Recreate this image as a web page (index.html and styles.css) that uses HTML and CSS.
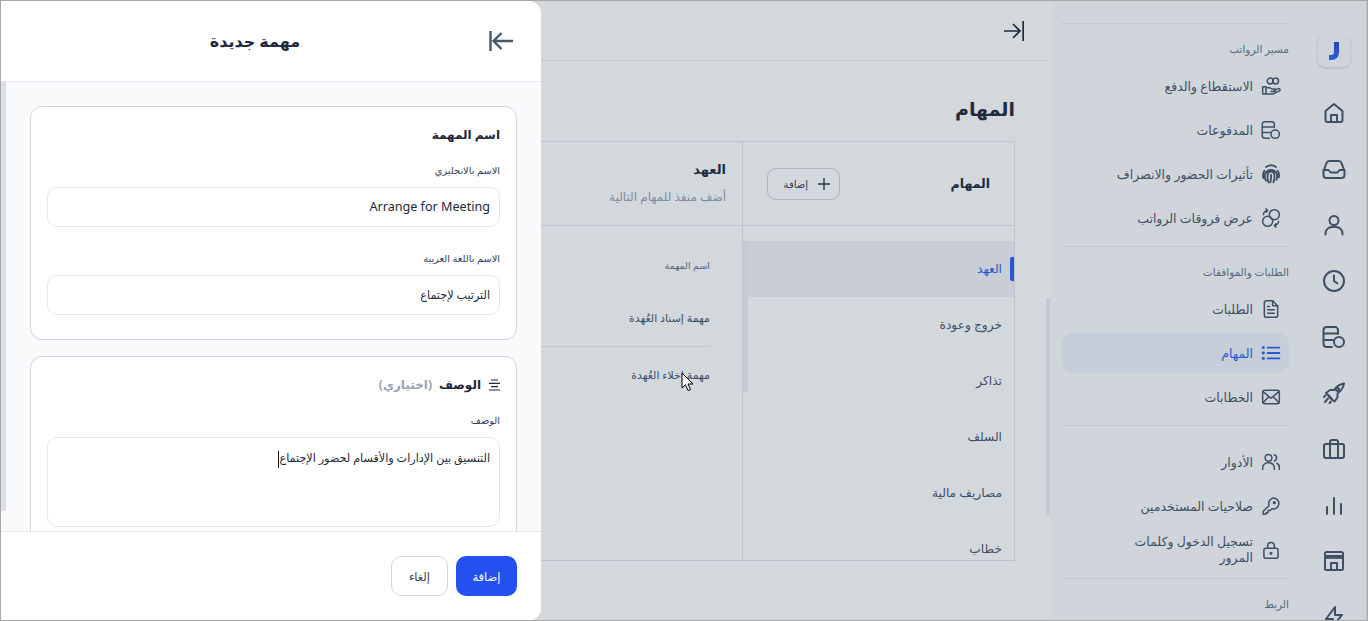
FILE: index.html
```html
<!DOCTYPE html>
<html lang="ar" dir="rtl">
<head>
	<meta charset="UTF-8">
	<title>المهام</title>
	<link rel="stylesheet" href="styles.css">
</head>
<body>
<div class="app">

	<!-- icon rail -->
	<nav class="rail">
		<div class="logo">
			<svg width="10" height="18" viewBox="0 0 10 18"><defs><linearGradient id="j" x1="0" y1="0" x2="0" y2="1"><stop offset="0" stop-color="#1f4cb0"/><stop offset=".6" stop-color="#2b62ee"/></linearGradient></defs><path fill="url(#j)" d="M5 0h5v10c0 5-3 8-8 8H0v-5h2c2 0 3-1 3-3z"/></svg>
		</div>
		<svg class="rail-icon" viewBox="0 0 24 24"><path d="M3.500 10 12 3l8.500 7v9a2 2 0 0 1-2 2h-13a2 2 0 0 1-2-2z"/><path d="M9 21v-7h6v7"/></svg>
		<svg class="rail-icon" viewBox="0 0 24 24"><path d="M1.500 14 4.500 6a3 3 0 0 1 2.800-2h9.400a3 3 0 0 1 2.800 2l3 8v4a3 3 0 0 1-3 3h-15a3 3 0 0 1-3-3z"/><path d="M1.500 13h5l2 2.500h7l2-2.500h5"/></svg>
		<svg class="rail-icon" viewBox="0 0 24 24"><circle cx="12" cy="7.500" r="4.500"/><path d="M3.500 21.500v-1a6.500 6.500 0 0 1 6.500-6.500h4a6.500 6.500 0 0 1 6.500 6.500v1"/></svg>
		<svg class="rail-icon" viewBox="0 0 24 24"><circle cx="12" cy="12" r="10"/><path d="M12 6.500V12l3.500 2.500"/></svg>
		<svg class="rail-icon" viewBox="0 0 24 24"><path d="M16 9V5c0-1.700-1.500-3-3-3H5C3 2 1.500 3.300 1.500 5v14c0 1.700 1.500 3 3.500 3h5M1.500 8.500H16M1.500 15H11"/><circle cx="17" cy="17" r="5"/></svg>
		<svg class="rail-icon" viewBox="0 0 24 24"><path d="M6.500 14.500 4 12l4-3h4c3-4 6-6 10-6.500C21.500 6.500 19.500 9.500 15.500 12.500v4l-3 4-3-2.500z"/><path d="M6.500 14.500 9.500 18M6 17.500 3 21M3.500 14.500 2 16M9 20.500 7.500 22"/><circle cx="15.500" cy="8.500" r="1.500"/></svg>
		<svg class="rail-icon" viewBox="0 0 24 24"><rect x="2" y="7" width="20" height="14" rx="2"/><path d="M8 21V5a2 2 0 0 1 2-2h4a2 2 0 0 1 2 2v16"/></svg>
		<svg class="rail-icon" viewBox="0 0 24 24"><path d="M5 21v-7M12 21V5M19 21V11"/></svg>
		<svg class="rail-icon" viewBox="0 0 24 24"><rect x="3" y="3" width="18" height="18" rx="1.500"/><path d="M3 7h18M3 7c0 2.500 4.500 2.500 4.500 0 0 2.500 4.500 2.500 4.500 0 0 2.500 4.500 2.500 4.500 0 0 2.500 4.500 2.500 4.500 0M9 21v-7h6v7"/></svg>
		<svg class="rail-icon" viewBox="0 0 24 24"><path d="M13 2 4 14h7l-1 8 10-12h-7z"/></svg>
	</nav>

	<!-- section menu -->
	<aside class="side">
		<div class="side-group side-group-cut">
			<a class="side-item"><svg class="side-icon" viewBox="0 0 24 24"><path d="M5 4l14 16M19 4 5 20"/></svg><span>الإعدادات</span></a>
		</div>
		<div class="side-group">
			<div class="side-label">مسير الرواتب</div>
			<a class="side-item"><svg class="side-icon" viewBox="0 0 24 24"><circle cx="11" cy="6" r="3.500"/><circle cx="17.500" cy="6" r="3.500"/><path d="M2 13h4v8.500H2zM6 14h4l3 1.500h3a1.500 1.500 0 0 1 0 3h-4M16 17l4.500-1.800a1.500 1.500 0 0 1 1.500 2.600l-7 3.700H6"/></svg><span>الاستقطاع والدفع</span></a>
			<a class="side-item"><svg class="side-icon" viewBox="0 0 24 24"><path d="M16 9V5c0-1.700-1.500-3-3-3H5C3 2 1.500 3.300 1.500 5v14c0 1.700 1.500 3 3.500 3h5M1.500 8.500H16M1.500 15H11"/><circle cx="17" cy="17" r="5"/></svg><span>المدفوعات</span></a>
			<a class="side-item"><svg class="side-icon side-icon-thick" viewBox="0 0 24 24"><path d="M3 17a11 11 0 0 1 1-9M6 3.500a11 11 0 0 1 12 0M20 8a11 11 0 0 1 1.500 8M6 20a9 9 0 0 1-1-8 7.500 7.500 0 0 1 14 0c.5 2.500.5 5-.5 7M9 22c-1-2.500-1.500-5.500-1-9a4 4 0 0 1 8 0c.5 3.500 0 6-1 9M12 13c.3 3 0 6-.8 9"/></svg><span>تأثيرات الحضور والانصراف</span></a>
			<a class="side-item"><svg class="side-icon" viewBox="0 0 24 24"><circle cx="8" cy="16" r="6"/><circle cx="16" cy="8" r="6"/><path d="M3 8a5 5 0 0 1 5-5L6 1M6 5l2-2M21 16a5 5 0 0 1-5 5l2 2M18 19l-2 2"/></svg><span>عرض فروقات الرواتب</span></a>
		</div>
		<div class="side-group">
			<div class="side-label">الطلبات والموافقات</div>
			<a class="side-item"><svg class="side-icon" viewBox="0 0 24 24"><path d="M14 2H6.500A2.500 2.500 0 0 0 4 4.500v15A2.500 2.500 0 0 0 6.500 22h11a2.500 2.500 0 0 0 2.500-2.500V8z"/><path d="M14 2v6h6M8 13h8M8 17h8M8 9h2"/></svg><span>الطلبات</span></a>
			<a class="side-item side-item-on"><svg class="side-icon" viewBox="0 0 24 24"><path d="M8 5.500h14M8 12h14M8 18.500h14" stroke-width="2.200"/><path d="M2.500 5.500h.5M2.500 12h.5M2.500 18.500h.5" stroke-width="3.400"/></svg><span>المهام</span></a>
			<a class="side-item"><svg class="side-icon" viewBox="0 0 24 24"><rect x="2" y="4" width="20" height="16" rx="2.500"/><path d="m2.500 5.500 9.500 8 9.500-8M2.500 19l7-7.500M21.500 19l-7-7.500"/></svg><span>الخطابات</span></a>
		</div>
		<div class="side-group side-group-nolabel">
			<a class="side-item"><svg class="side-icon" viewBox="0 0 24 24"><circle cx="9" cy="7" r="4"/><path d="M2 21v-2a6 6 0 0 1 6-6h2a6 6 0 0 1 6 6v2M16 3.200a4 4 0 0 1 0 7.600M19 13.500a6 6 0 0 1 3 5.500v2"/></svg><span>الأدوار</span></a>
			<a class="side-item"><svg class="side-icon" viewBox="0 0 24 24"><path d="M15 2.500a6.500 6.500 0 1 1-1.800 12.750L11 17.500H8.500V20H6v2H2.500v-3.500l7.200-7.200A6.500 6.500 0 0 1 15 2.500z"/><circle cx="16" cy="8" r="1"/></svg><span>صلاحيات المستخدمين</span></a>
			<a class="side-item"><svg class="side-icon" viewBox="0 0 24 24"><rect x="3.500" y="10" width="17" height="12" rx="2.500"/><path d="M8 10V7a4 4 0 0 1 8 0v3"/><circle cx="12" cy="16" r="1"/></svg><span class="side-wrap">تسجيل الدخول وكلمات<br>المرور</span></a>
		</div>
		<div class="side-group side-group-last">
			<div class="side-label">الربط</div>
		</div>
	</aside>

	<!-- page behind the drawer -->
	<main class="page">
		<header class="topbar">
			<svg class="topbar-icon" viewBox="0 0 20 20"><path d="M0 10h16M9 3l7 7-7 7M19.200 0v20"/></svg>
		</header>
		<div class="content">
			<h1 class="page-title">المهام</h1>
			<section class="board">
				<div class="board-side">
					<div class="board-head">
						<h2>المهام</h2>
						<button class="btn-add"><svg width="12" height="12" viewBox="0 0 12 12"><path d="M6 0v12M0 6h12"/></svg>إضافة</button>
					</div>
					<ul class="type-list">
						<li class="type-on">العهد</li>
						<li>خروج وعودة</li>
						<li>تذاكر</li>
						<li>السلف</li>
						<li>مصاريف مالية</li>
						<li>خطاب</li>
					</ul>
					<div class="list-thumb"></div>
				</div>
				<div class="board-main">
					<div class="main-head">
						<h2>العهد</h2>
						<p>أضف منفذ للمهام التالية</p>
					</div>
					<div class="task-table">
						<div class="task-heading">اسم المهمة</div>
						<div class="task-row task-row-line">مهمة إسناد العُهدة</div>
						<div class="task-row">مهمة إخلاء العُهدة</div>
					</div>
				</div>
			</section>
		</div>
		<div class="page-thumb"></div>
	</main>

	<div class="dim"></div>

	<!-- new task drawer -->
	<section class="drawer">
		<header class="drawer-head">
			<h2>مهمة جديدة</h2>
			<svg class="drawer-close" viewBox="0 0 24 20"><path d="M1.500 0v20M24 10H4.500M12.500 2 4.500 10l8 8"/></svg>
		</header>
		<div class="drawer-body">
			<div class="drawer-thumb"></div>
			<div class="form-card">
				<h3>اسم المهمة</h3>
				<div class="field-label">الاسم بالانجليزي</div>
				<div class="field">Arrange for Meeting</div>
				<div class="field-label field-label-next">الاسم باللغة العربية</div>
				<div class="field field-ar">الترتيب لإجتماع</div>
			</div>
			<div class="form-card">
				<h3 class="desc-title">
					<svg width="11" height="12" viewBox="0 0 11 12"><path d="M2 1h7M0 4.300h11M2 7.700h7M0 11h11"/></svg>
					الوصف <span>(اختياري)</span>
				</h3>
				<div class="field-label">الوصف</div>
				<div class="field field-ar field-area">التنسيق بين الإدارات والأقسام لحضور الإجتماع<i class="caret"></i></div>
			</div>
		</div>
		<footer class="drawer-foot">
			<button class="btn-primary">إضافة</button>
			<button class="btn-cancel">إلغاء</button>
		</footer>
	</section>

	<svg class="cursor" width="13" height="20" viewBox="0 0 13 20"><path d="M1 1v15l3.500-3.200L7 18.500l2.500-1-2.500-5.500h5z"/></svg>
</div>
</body>
</html>
```

FILE: styles.css
```css
* {
	box-sizing: border-box;
}
html, body {
	margin: 0;
	height: 100%;
}
body {
	font-family: "Noto Sans", "DejaVu Sans", sans-serif;
	color: #1e293b;
	overflow: hidden;
}
h1, h2, h3, p, ul {
	margin: 0;
	padding: 0;
}
button {
	font-family: inherit;
	cursor: pointer;
}

/**
 * Page frame
 */
.app {
	position: relative;
	display: flex;
	height: 621px;
	border: 1px solid #a8a8a8;
	background: #fff;
	overflow: hidden;
}

/**
 * Icon rail
 */
.rail {
	flex: none;
	width: 66px;
	padding-top: 34px;
	display: flex;
	flex-direction: column;
	align-items: center;
	border-right: 1px solid #e6e9ee;
	background: #fcfcfd;
}
.logo {
	flex: none;
	width: 32px;
	height: 32px;
	margin-bottom: 34px;
	display: flex;
	align-items: center;
	justify-content: center;
	border-radius: 7px;
	background: #fafbfd;
	box-shadow: 0 1px 3px rgba(16,24,40,.2);
}
.rail-icon {
	flex: none;
	width: 24px;
	height: 24px;
	margin-bottom: 32px;
	fill: none;
	stroke: #475569;
	stroke-width: 2;
	stroke-linejoin: round;
	stroke-linecap: round;
}

/**
 * Section menu
 */
.side {
	flex: none;
	width: 251px;
	padding: 0 12px;
	background: #fcfcfd;
	overflow: hidden;
}
.side-group {
	display: flex;
	flex-direction: column;
	padding-bottom: 6px;
	border-bottom: 1px solid #e6e9ee;
}
.side-group-cut {
	margin-top: -31px;
	padding-bottom: 9px;
}
.side-group-nolabel {
	padding-top: 14px;
}
.side-group-last {
	border-bottom: 0;
}
.side-label {
	height: 18px;
	margin: 16px 0 6px;
	font-size: 10.500px;
	line-height: 18px;
	color: #64748b;
}
.side-item {
	display: flex;
	align-items: center;
	gap: 8px;
	height: 40px;
	margin: 2px 0;
	padding: 0 8px;
	border-radius: 10px;
	font-size: 12.500px;
	color: #475569;
}
.side-icon {
	flex: none;
	width: 20px;
	height: 20px;
	fill: none;
	stroke: currentColor;
	stroke-width: 1.800;
	stroke-linejoin: round;
	stroke-linecap: round;
}
.side-icon-thick {
	stroke-width: 2.200;
}
.side-wrap {
	line-height: 16px;
}
.side-item-on {
	background: #eff3fb;
	color: #2b62ee;
}

/**
 * Page behind the drawer
 */
.page {
	position: relative;
	flex: 1;
	min-width: 0;
	background: #fff;
}
.topbar {
	height: 60px;
	margin-right: 3px;
	padding: 20px 23px 0 0;
	border-bottom: 1px solid #e8eaee;
}
.topbar-icon {
	display: block;
	width: 20px;
	height: 20px;
	fill: none;
	stroke: #1f2937;
	stroke-width: 1.700;
}
.content {
	padding: 33px 35px 0 30px;
}
.page-title {
	height: 30px;
	margin-bottom: 17px;
	font-size: 19px;
	line-height: 30px;
	font-weight: 700;
}
.board {
	display: flex;
	height: 420px;
	border: 1px solid #e4e7ec;
}
.board-side {
	position: relative;
	flex: none;
	width: 272px;
	border-left: 1px solid #e4e7ec;
	overflow: hidden;
}
.board-head {
	height: 84px;
	padding: 0 24px;
	display: flex;
	align-items: center;
	justify-content: space-between;
	border-bottom: 1px solid #e4e7ec;
}
.board-head h2 {
	font-size: 12.500px;
	font-weight: 700;
}
.btn-add {
	width: 73px;
	height: 32px;
	padding: 0 9px 0 0;
	display: flex;
	align-items: center;
	gap: 10px;
	border: 1px solid #d0d5dd;
	border-radius: 9px;
	background: transparent;
	font-size: 10px;
	color: #344054;
}
.btn-add svg {
	fill: none;
	stroke: #1e293b;
	stroke-width: 1.300;
}
.type-list {
	padding-top: 15px;
	list-style: none;
}
.type-list li {
	position: relative;
	height: 56px;
	padding-right: 12px;
	font-size: 12.200px;
	line-height: 56px;
	color: #475569;
}
.type-on {
	background: #f2f2f9;
	color: #2f5fe8 !important;
}
.type-on:after {
	content: '';
	position: absolute;
	top: 16px;
	right: 0;
	width: 4px;
	height: 24px;
	border-radius: 2px 0 0 2px;
	background: #2b5cf0;
}
.list-thumb {
	position: absolute;
	top: 99px;
	left: 0;
	width: 5px;
	height: 151px;
	border-radius: 3px;
	background: #edeef4;
}
.board-main {
	flex: 1;
	min-width: 0;
}
.main-head {
	height: 84px;
	padding: 17px 16px 0 0;
	border-bottom: 1px solid #e4e7ec;
}
.main-head h2 {
	height: 20px;
	font-size: 13px;
	line-height: 20px;
	font-weight: 700;
}
.main-head p {
	margin-top: 8px;
	font-size: 12px;
	line-height: 20px;
	color: #94a3b8;
}
.task-table {
	width: 500px;
	padding: 26px 32px 0 0;
	font-size: 11px;
	color: #475569;
}
.task-heading {
	height: 28px;
	margin-bottom: 10px;
	font-size: 9.500px;
	line-height: 28px;
	color: #667085;
}
.task-row {
	height: 57px;
	line-height: 56px;
}
.task-row-line {
	border-bottom: 1px solid #e8eaee;
}
.page-thumb {
	position: absolute;
	top: 297px;
	right: 0;
	width: 4px;
	height: 217px;
	border-radius: 2px;
	background: #ebedf2;
}

/**
 * Dim layer and drawer
 */
.dim {
	position: absolute;
	top: 0; right: 0; bottom: 0; left: 0;
	background: rgba(35,60,85,.2);
}
.drawer {
	position: absolute;
	top: 0; bottom: 0; left: 0;
	width: 540px;
	display: flex;
	flex-direction: column;
	border-radius: 0 12px 12px 0;
	background: #fff;
	overflow: hidden;
}
.drawer-head {
	flex: none;
	height: 81px;
	padding-right: 28px;
	display: flex;
	align-items: center;
	border-bottom: 1px solid #e6e9ee;
}
.drawer-head h2 {
	flex: 1;
	padding-left: 20px;
	text-align: center;
	font-size: 16px;
	font-weight: 700;
}
.drawer-close {
	order: -1;
	flex: none;
	width: 24px;
	height: 20px;
	fill: none;
	stroke: #475569;
	stroke-width: 2.400;
}
.drawer-body {
	position: relative;
	flex: 1;
	min-height: 0;
	padding: 24px 24px 0 29px;
	background: #f9fafc;
	overflow: hidden;
}
.drawer-thumb {
	position: absolute;
	top: 0;
	left: 0;
	width: 5px;
	height: 429px;
	background: #dcdfe4;
}
.form-card {
	margin-bottom: 16px;
	padding: 18px 16px 24px;
	border: 1px solid #d0d5dd;
	border-radius: 12px;
	background: #fff;
}
.form-card h3 {
	height: 20px;
	margin-bottom: 18px;
	font-size: 12px;
	line-height: 20px;
	font-weight: 700;
}
.desc-title {
	display: flex;
	align-items: center;
	gap: 5px;
}
.desc-title svg {
	flex: none;
	fill: none;
	stroke: #1e293b;
	stroke-width: 1.200;
	margin-left: 3px;
}
.desc-title span {
	margin-right: 2px;
	color: #98a2b3;
}
.field-label {
	height: 16px;
	margin-bottom: 8px;
	font-size: 9.800px;
	line-height: 16px;
	color: #344054;
}
.field-label-next {
	margin-top: 24px;
}
.field {
	height: 40px;
	padding: 0 9px;
	border: 1px solid #e4e7ec;
	border-radius: 10px;
	background: #fff;
	font-size: 12.600px;
	line-height: 38px;
	color: #1d2939;
}
.field-ar {
	font-size: 11.200px;
}
.field-area {
	height: 90px;
	line-height: 20px;
	padding-top: 10px;
}
.caret {
	display: inline-block;
	width: 1px;
	height: 17px;
	vertical-align: middle;
	background: #111;
}
.drawer-foot {
	flex: none;
	height: 89px;
	padding: 24px;
	display: flex;
	gap: 8px;
	border-top: 1px solid #e6e9ee;
	background: #fff;
}
.drawer-foot button {
	height: 40px;
	padding: 0;
	border-radius: 10px;
	font-size: 11.500px;
}
.btn-primary {
	width: 61px;
	border: 0;
	background: #2450f0;
	color: #fff;
}
.btn-cancel {
	width: 57px;
	border: 1px solid #d0d5dd;
	background: #fff;
	color: #344054;
}
.cursor {
	position: absolute;
	top: 371px;
	left: 680px;
	fill: #fff;
	stroke: #000;
	stroke-width: 1;
}
```
